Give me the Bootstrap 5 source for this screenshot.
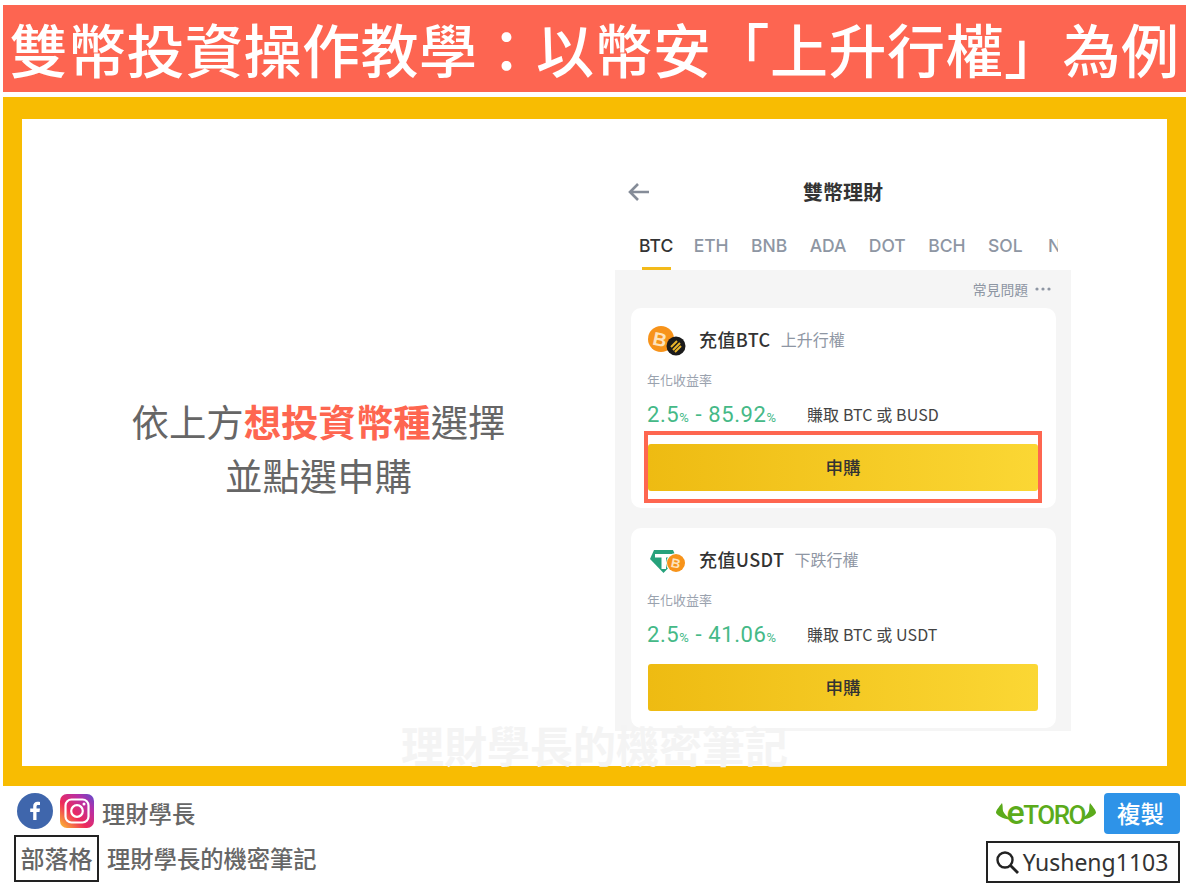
<!DOCTYPE html>
<html lang="zh-Hant">
<head>
  <meta charset="UTF-8">
  <meta name="viewport" content="width=device-width, initial-scale=1.0">
  <title>雙幣投資操作教學</title>
  <link href="https://cdn.jsdelivr.net/npm/bootstrap@5.3.0/dist/css/bootstrap.min.css" rel="stylesheet">
  <style>
    body { font-family: "Noto Sans CJK TC", "Liberation Sans", sans-serif; background: #fff; }
    .page-wrap { width: 1192px; height: 893px; padding: 5px 6px 0 3px; overflow: hidden; }
    .title-bar { height: 87px; background: #fd6551; color: #fff; font-size: 58px; letter-spacing: .5px; font-weight: 500; line-height: 87px; white-space: nowrap; }
    .frame { margin-top: 5px; height: 689px; background: #f8bc02; padding: 22px 19px 20px; }
    .inner { position: relative; height: 647px; background: #fff; }
    .left-text { width: 593px; padding-top: 10px; font-size: 37.4px; line-height: 54px; color: #666; }
    .left-text strong { color: #fe6650; }
    .phone { width: 456px; padding-top: 46px; }
    .phone-head { height: 54px; padding-left: 12px; }
    .phone-title { font-size: 20px; font-weight: 700; color: #333; margin-left: 152px; }
    .tabs { height: 51px; margin-left: 24px; width: 419px; overflow: hidden; gap: 22.4px; font-family: Inter, sans-serif; font-size: 17.5px; font-weight: 500; color: #8e96a3; white-space: nowrap; }
    .tabs span { line-height: 54px; position: relative; }
    .tabs span:last-child { margin-left: 3px; }
    .tabs .on { color: #333; margin-right: -2px; }
    .tabs .on::after { content: ""; position: absolute; left: 3px; right: 2px; bottom: 0; height: 3px; background: #f3ba1a; }
    .gray-panel { height: 461px; background: #f5f5f5; padding: 0 15px 0 16px; }
    .faq { height: 38px; font-size: 13.8px; color: #8e96a3; padding-right: 5px; }
    .faq-dots { margin-left: 7px; }
    .coin-card { height: 200px; border-radius: 10px; padding: 16px 18px 17px 17px; margin-bottom: 20px; }
    .coin-head { height: 30px; font-size: 18px; letter-spacing: .4px; font-weight: 500; color: #333; }
    .coin-icon { width: 38px; height: 30px; margin-left: -1px; margin-right: 14px; flex: none; overflow: visible; }
    .coin-sub { font-size: 16px; letter-spacing: 0; font-weight: 400; color: #8e96a3; margin-left: 10px; }
    .apy-label { font-size: 13px; color: #9aa2ae; margin-top: 16px; margin-left: -1px; line-height: 20px; }
    .apy-row { margin-top: 6px; height: 36px; margin-left: -1px; }
    .apy-val { width: 160px; font-family: Roboto, sans-serif; font-size: 22px; letter-spacing: .6px; color: #45b987; white-space: nowrap; }
    .apy-val small { font-size: 13px; }
    .earn { font-size: 16px; letter-spacing: .1px; color: #444; }
    .buy-wrap { position: relative; margin-top: 12px; }
    .buy-btn { height: 47px; border-radius: 3px; border: 0; background: linear-gradient(90deg, #eebb12, #fbd734); font-size: 17.5px; font-weight: 500; color: #333; }
    .hilite { position: absolute; left: -4px; right: -4px; top: -13px; bottom: -12px; border: 4px solid #fe6650; }
    .watermark { position: absolute; left: 379px; top: 599px; font-size: 43px; line-height: 52px; font-weight: 700; color: #f4f4f4; white-space: nowrap; }
    .foot { padding: 7px 6px 0 11px; }
    .foot-first { margin-left: 3px; height: 36px; }
    .foot-second { margin-top: 6px; }
    .ig-icon { margin-left: 7px; }
    .foot-name { font-size: 23.3px; font-weight: 500; color: #666; margin-left: 8px; }
    .foot-first .foot-name { line-height: 30px; padding-top: 3px; }
    .foot-second .foot-name { line-height: 36px; padding-bottom: 2px; }
    .blog-box { width: 85px; height: 47px; padding-bottom: 2px; border: 2px solid #222; font-size: 24px; font-weight: 500; color: #666; }
    .etoro { color: #5bab1b; font-family: Roboto, sans-serif; font-size: 26px; font-weight: 500; line-height: 36px; letter-spacing: -1.5px; margin: 0 -5px; white-space: nowrap; }
    .etoro-e { font-size: 34px; }
    .copy-btn { width: 76px; height: 41px; padding: 0 3px 1px 0; border: 0; border-radius: 4px; background: #2e93e8; color: #fff; font-size: 23.5px; font-weight: 500; line-height: 39px; }
    .search-box { width: 194px; height: 42px; margin-top: 7px; padding-right: 3px; border: 2px solid #222; font-family: "Noto Sans", sans-serif; font-size: 23px; color: #333; }
  </style>
</head>
<body class="m-0">
  <div class="page-wrap">
    <div class="title-bar text-center">雙幣投資操作教學：以幣安「上升行權」為例</div>

    <div class="frame">
      <div class="inner d-flex">
        <div class="left-text d-flex flex-column justify-content-center align-items-center">
          <div>依上方<strong>想投資幣種</strong>選擇</div>
          <div>並點選申購</div>
        </div>

        <div class="phone">
          <div class="phone-head d-flex align-items-center">
            <svg width="24" height="20" viewBox="0 0 24 20"><path d="M22 10H3M11 2 3 10l8 8" fill="none" stroke="#858c98" stroke-width="2.6"/></svg>
            <div class="phone-title">雙幣理財</div>
          </div>
          <div class="tabs d-flex">
            <span class="on">BTC</span><span>ETH</span><span>BNB</span><span>ADA</span><span>DOT</span><span>BCH</span><span>SOL</span><span>N</span>
          </div>
          <div class="gray-panel">
            <div class="faq d-flex justify-content-end align-items-center">常見問題
              <svg class="faq-dots" width="16" height="4" viewBox="0 0 16 4"><circle cx="2" cy="2" r="1.600" fill="#8e96a3"/><circle cx="8" cy="2" r="1.600" fill="#8e96a3"/><circle cx="14" cy="2" r="1.600" fill="#8e96a3"/></svg>
            </div>

            <div class="card coin-card border-0">
              <div class="coin-head d-flex align-items-center">
                <svg class="coin-icon" viewBox="0 0 38 30">
                  <circle cx="14" cy="15" r="13" fill="#f7931a"/>
                  <text x="13" y="22" text-anchor="middle" font-family="Liberation Sans" font-size="19" font-weight="700" fill="#fde3bd" transform="rotate(12 13 15)">B</text>
                  <circle cx="29" cy="22" r="9.500" fill="#1b1b1b"/>
                  <path d="M24 23 30 17M26 26 33 19M28 28 34 22" stroke="#e9b52a" stroke-width="2"/>
                </svg>
                充值BTC<span class="coin-sub">上升行權</span>
              </div>
              <div class="apy-label">年化收益率</div>
              <div class="apy-row d-flex align-items-center">
                <div class="apy-val">2.5<small>%</small> - 85.92<small>%</small></div>
                <div class="earn">賺取 BTC 或 BUSD</div>
              </div>
              <div class="buy-wrap">
                <button type="button" class="btn buy-btn w-100 p-0">申購</button>
                <div class="hilite"></div>
              </div>
            </div>

            <div class="card coin-card border-0">
              <div class="coin-head d-flex align-items-center">
                <svg class="coin-icon" viewBox="0 0 38 30">
                  <path d="M7 6H26L30 15 16.500 29 3 15Z" fill="#26a17b"/>
                  <path d="M8 10H25V13.500H19V25H14.500V13.500H8Z" fill="#fff"/>
                  <circle cx="29" cy="19" r="10" fill="#fff"/><circle cx="29" cy="19" r="9" fill="#f7931a"/>
                  <text x="29" y="24" text-anchor="middle" font-family="Liberation Sans" font-size="13" font-weight="700" fill="#fde3bd" transform="rotate(12 29 19)">B</text>
                </svg>
                充值USDT<span class="coin-sub">下跌行權</span>
              </div>
              <div class="apy-label">年化收益率</div>
              <div class="apy-row d-flex align-items-center">
                <div class="apy-val">2.5<small>%</small> - 41.06<small>%</small></div>
                <div class="earn">賺取 BTC 或 USDT</div>
              </div>
              <div class="buy-wrap">
                <button type="button" class="btn buy-btn w-100 p-0">申購</button>
              </div>
            </div>
          </div>
        </div>

        <div class="watermark">理財學長的機密筆記</div>
      </div>
    </div>

    <div class="foot d-flex justify-content-between">
      <div>
        <div class="foot-first d-flex align-items-center">
          <svg width="36" height="36" viewBox="0 0 36 36">
            <circle cx="18" cy="18" r="18" fill="#3f66ac"/>
            <path d="M19.500 27V19h3l.5-3.400h-3.500V13.500c0-1 .4-1.600 1.700-1.600H23V9c-.6-.1-1.500-.2-2.500-.2-2.600 0-4.300 1.600-4.300 4.300v2.500h-3V19h3v8Z" fill="#fff"/>
          </svg>
          <svg class="ig-icon" width="34" height="34" viewBox="0 0 34 34">
            <defs><linearGradient id="igGrad" x1="0" y1="1" x2="1" y2="0">
              <stop offset="0" stop-color="#fdc32e"/><stop offset=".4" stop-color="#ee2a5b"/><stop offset=".75" stop-color="#b52fa8"/><stop offset="1" stop-color="#5a4fcf"/>
            </linearGradient></defs>
            <rect width="34" height="34" rx="7" fill="url(#igGrad)"/>
            <rect x="5.500" y="5.500" width="23" height="23" rx="6" fill="none" stroke="#fff" stroke-width="2.200"/>
            <circle cx="17" cy="17" r="5.800" fill="none" stroke="#fff" stroke-width="2.200"/>
            <circle cx="24" cy="10" r="1.500" fill="#fff"/>
          </svg>
          <span class="foot-name">理財學長</span>
        </div>
        <div class="foot-second d-flex align-items-center">
          <div class="blog-box d-flex align-items-center justify-content-center">部落格</div>
          <span class="foot-name">理財學長的機密筆記</span>
        </div>
      </div>
      <div class="d-flex flex-column align-items-end">
        <div class="d-flex align-items-center">
          <svg width="16" height="24" viewBox="0 0 16 24"><path d="M6 1C3 5 0 8 0 11 3 15 9 17 15 18 11 14 8 12 7 9 6.500 6 7 4 6 1Z" fill="#5bab1b"/></svg>
          <span class="etoro"><span class="etoro-e">e</span>TORO</span>
          <svg width="16" height="24" viewBox="0 0 16 24"><path d="M10 1C13 5 16 8 16 11 13 15 7 17 1 18 5 14 8 12 9 9 9.500 6 9 4 10 1Z" fill="#5bab1b"/></svg>
          <button type="button" class="btn copy-btn ms-2">複製</button>
        </div>
        <div class="search-box d-flex align-items-center justify-content-center gap-1">
          <svg width="24" height="24" viewBox="0 0 24 24"><circle cx="10" cy="10" r="7.500" fill="none" stroke="#222" stroke-width="2.400"/><path d="M15.500 15.500 23 23" stroke="#222" stroke-width="2.800"/></svg>
          <span>Yusheng1103</span>
        </div>
      </div>
    </div>
  </div>
  <script src="https://cdn.jsdelivr.net/npm/bootstrap@5.3.0/dist/js/bootstrap.bundle.min.js"></script>
</body>
</html>
